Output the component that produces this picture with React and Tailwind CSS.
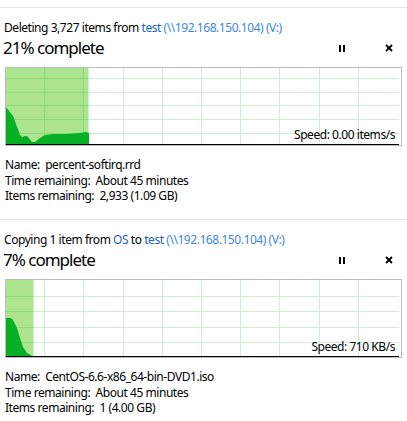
import React from "react";

const font = { fontFamily: '"Noto Sans", "Open Sans", sans-serif' };

const jobs = [
  {
    verb: "Deleting 3,727 items from ",
    from: null,
    dest: "test",
    path: " (\\\\192.168.150.104) (V:)",
    percent: 21,
    speed: "Speed: 0.00 items/s",
    rows: [10, 24, 37, 51, 65],
    area: "0,39 7,48 14,67 16,69 19,68 21,68 26,74 29,74 34,70 39,67 47,66 61,66 74,65 80,64 83,65 83,78 0,78",
    name: "percent-softirq.rrd",
    time: "About 45 minutes",
    items: "2,933 (1.09 GB)",
  },
  {
    verb: "Copying 1 item from ",
    from: "OS",
    dest: "test",
    path: " (\\\\192.168.150.104) (V:)",
    percent: 7,
    speed: "Speed: 710 KB/s",
    rows: [16, 31, 47, 62],
    area: "0,38 5,38 7,40 11,48 14,58 17,67 21,73 26,76 27,77 27,78 0,78",
    name: "CentOS-6.6-x86_64-bin-DVD1.iso",
    time: "About 45 minutes",
    items: "1 (4.00 GB)",
  },
];

const cols = [38, 77, 117, 156, 195, 234, 273, 313, 352];

function Chart({ job }) {
  const fill = (393 * job.percent) / 100;
  return (
    <div className="relative mx-[5px] h-[79px] border border-[#bcbcbc] bg-white">
      <svg width="393" height="77" className="block">
        <rect x="0" y="0" width={fill} height="77" fill="#ade48f" />
        {cols.map((x) => (
          <line key={x} x1={x + 0.5} y1="0" x2={x + 0.5} y2="77" stroke={x < fill ? "#8fd87a" : "#cdf0d2"} />
        ))}
        {job.rows.map((y) => (
          <g key={y}>
            <line x1="0" y1={y + 0.5} x2={fill} y2={y + 0.5} stroke="#8fd87a" />
            <line x1={fill} y1={y + 0.5} x2="393" y2={y + 0.5} stroke="#cdf0d2" />
          </g>
        ))}
        <polygon points={job.area} fill="#06b025" />
        <line x1="0" y1="76.5" x2="393" y2="76.5" stroke="#000" />
      </svg>
      <span className="absolute right-[6px] bottom-[2px] text-[12px] leading-[16px] tracking-[-0.45px] text-black">
        {job.speed}
      </span>
    </div>
  );
}

function Section({ job }) {
  return (
    <div className="h-[212px] border-t border-[#e5e5e5]">
      <div className="pl-[4px] pt-[12px] text-[12px] leading-[16px] tracking-[-0.45px] text-black whitespace-pre">
        {job.verb}
        {job.from && (
          <>
            <span className="text-[#1a63c6]">{job.from}</span>
            {" to "}
          </>
        )}
        <span className="text-[#1a63c6]">{job.dest}</span>
        <span className="text-[#3d87dc]">{job.path}</span>
      </div>
      <div className="flex items-center h-[24px] pl-[3px] pr-[14px]">
        <span className="flex-1 text-[17px] leading-[24px] tracking-[-1px] text-black">{job.percent}% complete</span>
        <div className="flex gap-[2px] w-[6px] h-[7px] mr-[40px]">
          <div className="w-[2px] h-full bg-black" />
          <div className="w-[2px] h-full bg-black" />
        </div>
        <svg width="8" height="8" viewBox="0 0 8 8">
          <path d="M1 1 L7 7 M7 1 L1 7" stroke="#000" strokeWidth="1.8" />
        </svg>
      </div>
      <div className="mt-[7px]">
        <Chart job={job} />
      </div>
      <div className="mt-[11px] pl-[5px] text-[12px] leading-[15.5px] tracking-[-0.45px] text-black whitespace-pre">
        <div>Name:  {job.name}</div>
        <div>Time remaining:  {job.time}</div>
        <div>Items remaining:  {job.items}</div>
      </div>
    </div>
  );
}

export default function App() {
  return (
    <div className="w-[407px] h-[421px] bg-white overflow-hidden pt-[7px]" style={font}>
      {jobs.map((job, i) => (
        <Section key={i} job={job} />
      ))}
    </div>
  );
}
